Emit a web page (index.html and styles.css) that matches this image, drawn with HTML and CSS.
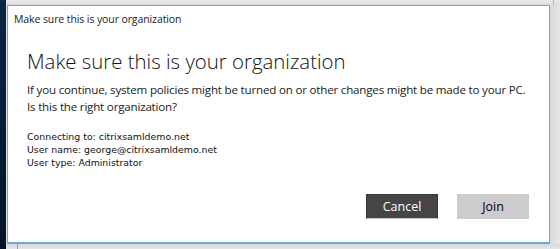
FILE: index.html
```html
<!DOCTYPE html>
<html lang="en">
<head>
    <meta charset="UTF-8">
    <title>Make sure this is your organization</title>
    <link rel="stylesheet" href="styles.css">
</head>
<body>

<div class="screen flex">
    <div class="taskbar"></div>
    <div class="desktop flex flex-column">
        <div class="top-strip flex">
            <div class="behind-top"></div>
        </div>
        <div class="row flex">
            <div class="dialog flex flex-column">
                <div class="titlebar">Make sure this is your organization</div>
                <div class="content">
                    <div class="heading">Make sure this is your organization</div>
                    <div class="text">
                        If you continue, system policies might be turned on or other changes might be made to your PC.<br/>
                        Is this the right organization?
                    </div>
                    <div class="details">
                        Connecting to: citrixsamldemo.net<br/>
                        User name: george@citrixsamldemo.net<br/>
                        User type: Administrator
                    </div>
                </div>
                <div class="buttons flex">
                    <button class="button dark">Cancel</button>
                    <button class="button light">Join</button>
                </div>
            </div>
            <div class="side"></div>
        </div>
        <div class="bottom-strip flex">
            <div class="behind-left"></div>
            <div class="behind-body"></div>
        </div>
    </div>
</div>
</body>
</html>
```

FILE: styles.css
```css
html, body {
    margin: 0;
    padding: 0;
}

body {
    width: 560px;
    height: 249px;
    overflow: hidden;
    background-color: #e4e4e4;
    font-family: "Open Sans", "Noto Sans", sans-serif;
}

.flex {
    display: flex;
}

.flex-column {
    flex-direction: column;
}

.screen {
    height: 100%;
    width: 100%;
}

.taskbar {
    width: 6px;
    background: linear-gradient(#0c2544, #061426);
}

.desktop {
    flex: 1;
    background-color: #e6e6e6;
}

.top-strip {
    height: 5px;
    background: linear-gradient(#e9e9e9, #dedede);
}

.behind-top {
    margin-left: 547px;
    width: 1px;
    background-color: #b8b8b8;
}

.row {
    height: 239px;
}

.dialog {
    margin-left: 1px;
    width: 541px;
    background: #fff;
    border: 1px solid #6ba6dc;
    border-bottom-width: 2px;
    box-shadow: 2px 2px 4px rgba(0, 0, 0, 0.15);
}

.side {
    flex: 1;
    background: linear-gradient(90deg, #d8d8d8, #e8e8e8);
}

.titlebar {
    height: 24px;
    padding: 6px 0 0 6px;
    box-sizing: border-box;
    font-size: 10.5px;
    line-height: 14px;
    letter-spacing: -0.1px;
    color: #222;
}

.content {
    flex: 1;
    padding: 0 19px;
}

.heading {
    margin-top: 16px;
    font-size: 20.4px;
    line-height: 30px;
    font-weight: 300;
    color: #111;
}

.text {
    margin-top: 5px;
    font-size: 11.6px;
    line-height: 17px;
    letter-spacing: -0.2px;
    white-space: nowrap;
    color: #222;
}

.details {
    margin-top: 15px;
    font-family: "DejaVu Sans", sans-serif;
    font-size: 9.4px;
    line-height: 13px;
    color: #111;
}

.buttons {
    justify-content: flex-end;
    gap: 19px;
    padding: 0 20px 23px 0;
}

.button {
    width: 72px;
    height: 25px;
    padding: 0;
    font-family: "Open Sans", "Noto Sans", sans-serif;
    font-size: 12.5px;
    border: 1px solid transparent;
    outline: none;
}

.button.dark {
    background-color: #454545;
    border-color: #3a3a3a #3a3a3a #c8c8c8 #3a3a3a;
    color: #fff;
}

.button.light {
    background-color: #cccccc;
    color: #000;
}

.bottom-strip {
    flex: 1;
    background: linear-gradient(#d9d9d9, #e6e6e6);
}

.behind-left {
    width: 11px;
    border-right: 1px solid #9a9a9a;
}
```
